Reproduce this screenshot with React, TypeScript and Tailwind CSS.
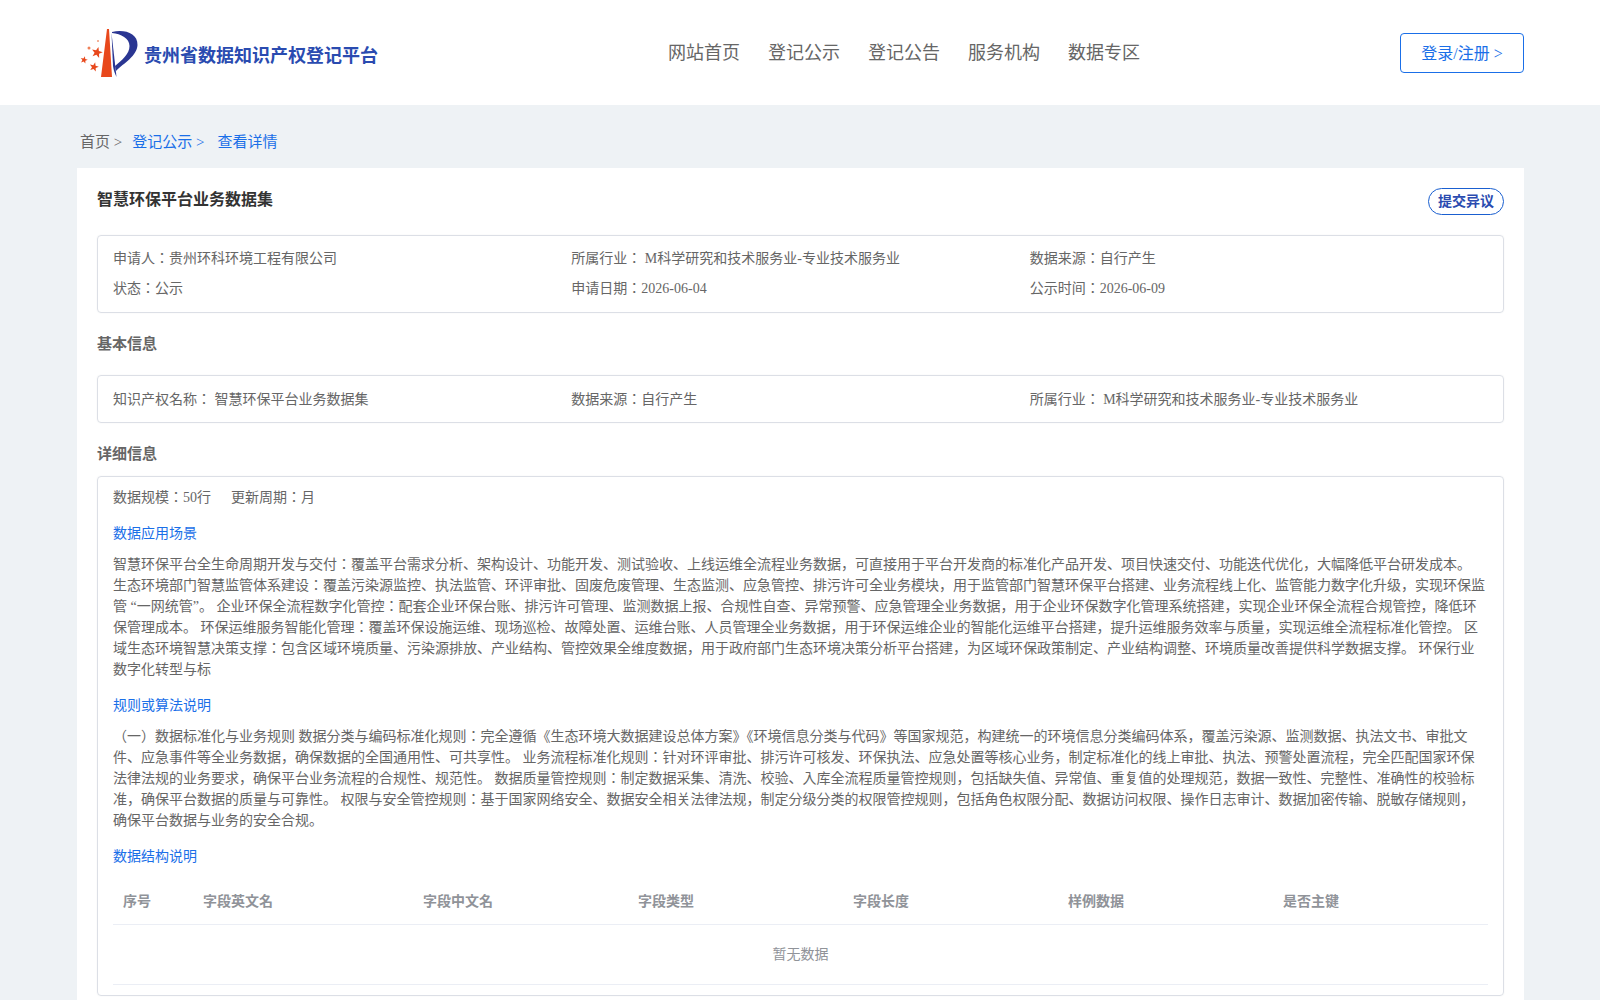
const FONT = "font-['Liberation_Serif','Noto_Sans_CJK_JP',serif]";

function star(cx: number, cy: number, r: number) {
  const pts: string[] = [];
  for (let i = 0; i < 10; i++) {
    const rad = i % 2 === 0 ? r : r * 0.42;
    const a = -Math.PI / 2 + 0.25 + (i * Math.PI) / 5;
    pts.push(`${(cx + rad * Math.cos(a)).toFixed(2)},${(cy + rad * Math.sin(a)).toFixed(2)}`);
  }
  return pts.join(" ");
}

function Logo() {
  return (
    <svg width="64" height="56" viewBox="77 25 64 56" className="shrink-0">
      <path d="M107 29 L109 29 L112 77 L101 77 Z" fill="#e8481c" />
      <path d="M111.500 33 L116.500 77 C 115 74 113.500 70 113 66 Z" fill="#2a3692" />
      <path d="M112 32 C 124 29 138 33 137.500 45 C 137 56 124 63 116 71 L115 66 C 122 60 129.500 54 129.500 46 C 129.500 38 121 34 112 33 Z" fill="#2a3692" />
      <polygon points={star(97, 52.500, 5.800)} fill="#e8481c" />
      <polygon points={star(94, 67, 4.800)} fill="#e8481c" />
      <polygon points={star(84, 60, 3.800)} fill="#e8481c" />
      <circle cx="89" cy="48" r="1.500" fill="#ef8058" />
      <circle cx="98" cy="41" r="1" fill="#ef9a7a" />
    </svg>
  );
}

function Box({ children, className }: { children: React.ReactNode; className: string }) {
  return <div className={`rounded-[4px] border border-[#dcdfe6] shadow-[0_0_2px_rgba(0,0,0,0.05)] ${className}`}>{children}</div>;
}

const nav = ["网站首页", "登记公示", "登记公告", "服务机构", "数据专区"];
const cols = ["字段英文名", "字段中文名", "字段类型", "字段长度", "样例数据", "是否主键"];

export default function App() {
  return (
    <div className={`min-h-screen bg-[#eef2f5] text-[14px] text-[#666666] ${FONT}`}>
      <header className="flex h-[105px] items-center bg-white pl-[77px] pr-[76px]">
        <div className="flex w-[500px] items-center">
          <Logo />
          <span className="ml-[3px] mt-[8px] text-[18px] font-bold text-[#2a4bb0]">贵州省数据知识产权登记平台</span>
        </div>
        <nav className="ml-[91px] flex flex-1 gap-[28px] pt-[1px] text-[18px] text-[#666666]">
          {nav.map((n) => <span key={n}>{n}</span>)}
        </nav>
        <button className="h-[40px] w-[124px] rounded-[4px] border border-[#1a6fe8] pt-[3px] text-[16px] text-[#1a6fe8]">登录/注册 &gt;</button>
      </header>

      <div className="flex h-[63px] items-center pl-[80px] pt-[12px] text-[15px]">
        <span>首页 &gt;</span>
        <span className="ml-[10px] text-[#1a6fe8]">登记公示 &gt;</span>
        <span className="ml-[13px] text-[#1a6fe8]">查看详情</span>
      </div>

      <main className="mx-[77px] w-[1447px] bg-white px-[20px] pt-[20px] pb-[5px]">
        <div className="flex h-[47px] items-start justify-between">
          <h1 className="text-[16px] font-bold leading-[24px] text-[#333333]">智慧环保平台业务数据集</h1>
          <button className="h-[27px] rounded-[14px] border border-[#1a5fd0] px-[9px] text-[14px] font-bold text-[#2a4bb0]">提交异议</button>
        </div>

        <Box className="px-[15px] pt-[12px] pb-[13px]">
          <div className="grid grid-cols-3 gap-y-[9px] leading-[21px]">
            <div>申请人：贵州环科环境工程有限公司</div>
            <div>所属行业： M科学研究和技术服务业-专业技术服务业</div>
            <div>数据来源：自行产生</div>
            <div>状态：公示</div>
            <div>申请日期：2026-06-04</div>
            <div>公示时间：2026-06-09</div>
          </div>
        </Box>

        <h2 className="mt-[21px] mb-[20px] text-[15px] font-bold leading-[21px]">基本信息</h2>

        <Box className="px-[15px] pt-[13px] pb-[12px]">
          <div className="grid grid-cols-3 leading-[21px]">
            <div>知识产权名称： 智慧环保平台业务数据集</div>
            <div>数据来源：自行产生</div>
            <div>所属行业： M科学研究和技术服务业-专业技术服务业</div>
          </div>
        </Box>

        <h2 className="mt-[21px] mb-[11px] text-[15px] font-bold leading-[21px]">详细信息</h2>

        <Box className="px-[15px] pt-[10px] pb-[10px]">
          <div className="leading-[21px]">
            <span>数据规模：50行</span>
            <span className="ml-[20px]">更新周期：月</span>
          </div>
          <div className="mt-[15px] leading-[21px] text-[#1a6fe8]">数据应用场景</div>
          <p className="mt-[10px] leading-[21px]">
            智慧环保平台全生命周期开发与交付：覆盖平台需求分析、架构设计、功能开发、测试验收、上线运维全流程业务数据，可直接用于平台开发商的标准化产品开发、项目快速交付、功能迭代优化，大幅降低平台研发成本。 生态环境部门智慧监管体系建设：覆盖污染源监控、执法监管、环评审批、固废危废管理、生态监测、应急管控、排污许可全业务模块，用于监管部门智慧环保平台搭建、业务流程线上化、监管能力数字化升级，实现环保监管 “一网统管”。 企业环保全流程数字化管控：配套企业环保台账、排污许可管理、监测数据上报、合规性自查、异常预警、应急管理全业务数据，用于企业环保数字化管理系统搭建，实现企业环保全流程合规管控，降低环保管理成本。 环保运维服务智能化管理：覆盖环保设施运维、现场巡检、故障处置、运维台账、人员管理全业务数据，用于环保运维企业的智能化运维平台搭建，提升运维服务效率与质量，实现运维全流程标准化管控。 区域生态环境智慧决策支撑：包含区域环境质量、污染源排放、产业结构、管控效果全维度数据，用于政府部门生态环境决策分析平台搭建，为区域环保政策制定、产业结构调整、环境质量改善提供科学数据支撑。 环保行业数字化转型与标
          </p>
          <div className="mt-[15px] leading-[21px] text-[#1a6fe8]">规则或算法说明</div>
          <p className="mt-[10px] leading-[21px]">
            （一）数据标准化与业务规则 数据分类与编码标准化规则：完全遵循《生态环境大数据建设总体方案》《环境信息分类与代码》等国家规范，构建统一的环境信息分类编码体系，覆盖污染源、监测数据、执法文书、审批文件、应急事件等全业务数据，确保数据的全国通用性、可共享性。 业务流程标准化规则：针对环评审批、排污许可核发、环保执法、应急处置等核心业务，制定标准化的线上审批、执法、预警处置流程，完全匹配国家环保法律法规的业务要求，确保平台业务流程的合规性、规范性。 数据质量管控规则：制定数据采集、清洗、校验、入库全流程质量管控规则，包括缺失值、异常值、重复值的处理规范，数据一致性、完整性、准确性的校验标准，确保平台数据的质量与可靠性。 权限与安全管控规则：基于国家网络安全、数据安全相关法律法规，制定分级分类的权限管控规则，包括角色权限分配、数据访问权限、操作日志审计、数据加密传输、脱敏存储规则，确保平台数据与业务的安全合规。
          </p>
          <div className="mt-[15px] leading-[21px] text-[#1a6fe8]">数据结构说明</div>
          <table className="mt-[11px] w-full table-fixed border-collapse">
            <thead>
              <tr className="h-[46px] border-b border-[#ebeef5] font-bold text-[#909399]">
                <th className="w-[80px] pl-[10px] pt-[1px] text-left">序号</th>
                <th className="w-[220px] pl-[10px] pt-[1px] text-left">{cols[0]}</th>
                {cols.slice(1).map((c) => <th key={c} className="pl-[10px] pt-[1px] text-left">{c}</th>)}
              </tr>
            </thead>
            <tbody>
              <tr className="h-[60px] border-b border-[#ebeef5]">
                <td colSpan={7} className="text-center text-[#909399]">暂无数据</td>
              </tr>
            </tbody>
          </table>
        </Box>
      </main>
    </div>
  );
}
